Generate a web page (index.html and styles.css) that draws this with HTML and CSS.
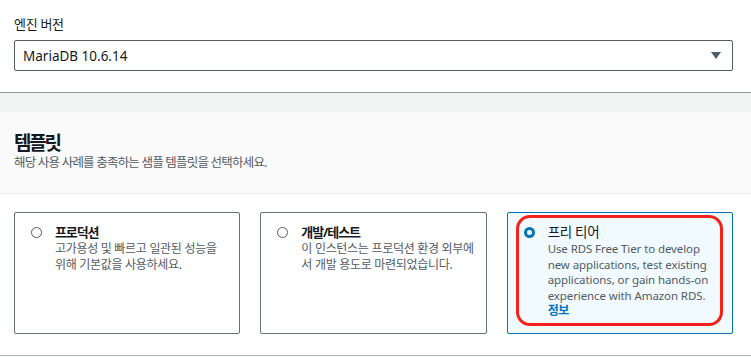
FILE: index.html
```html
<!DOCTYPE html>
<html lang="ko">
<head>
    <meta charset="UTF-8">
    <meta name="viewport" content="width=device-width, initial-scale=1.0">
    <title>템플릿</title>
    <link rel="stylesheet" href="styles.css">
</head>
<body>
    <div class="field">
        <div class="field_label">엔진 버전</div>
        <div class="select">
            <span class="select_value">MariaDB 10.6.14</span>
            <svg class="caret" width="10" height="8" viewBox="0 0 10 8"><polygon points="0,0 10,0 5,7" /></svg>
        </div>
    </div>

    <div class="band"></div>

    <div class="tpl_head">
        <h2 class="tpl_title">템플릿</h2>
        <p class="tpl_desc">해당 사용 사례를 충족하는 샘플 템플릿을 선택하세요.</p>
    </div>

    <div class="tiles">
        <label class="tile">
            <span class="radio"></span>
            <span class="tile_body">
                <span class="tile_title">프로덕션</span>
                <span class="tile_desc">고가용성 및 빠르고 일관된 성능을 위해 기본값을 사용하세요.</span>
            </span>
        </label>
        <label class="tile">
            <span class="radio"></span>
            <span class="tile_body">
                <span class="tile_title">개발/테스트</span>
                <span class="tile_desc">이 인스턴스는 프로덕션 환경 외부에서 개발 용도로 마련되었습니다.</span>
            </span>
        </label>
        <label class="tile on">
            <span class="radio"></span>
            <span class="tile_body">
                <span class="tile_title">프리 티어</span>
                <span class="tile_desc en">Use RDS Free Tier to develop new applications, test existing applications, or gain hands-on experience with Amazon RDS.</span>
                <a class="info" href="#">정보</a>
            </span>
            <span class="mark"></span>
        </label>
    </div>
</body>
</html>
```

FILE: styles.css
```css
*{
    margin: 0;
    padding: 0;
    box-sizing: border-box;
}
body{
    width: 751px;
    font-family: "Noto Sans", "Noto Sans CJK KR", sans-serif;
    color: #16191f;
    background: #fff;
}
a{
    text-decoration: none;
}

/* 엔진 버전 */
.field{
    padding: 14px 18px 21px 14px;
    border-bottom: 1px solid #879596;
}
.field_label{
    font-size: 13px;
    line-height: 20px;
    letter-spacing: -0.3px;
}
.select{
    display: flex;
    align-items: center;
    justify-content: space-between;
    height: 31px;
    margin-top: 6px;
    padding: 0 11px 0 8px;
    border: 1px solid #545b64;
    border-radius: 2px;
}
.select_value{
    font-size: 13.5px;
}
.caret{
    fill: #545b64;
}

.band{
    height: 19px;
    background: #f2f3f3;
}

/* 템플릿 */
.tpl_head{
    padding: 20px 14px 22px;
    background: #fafafa;
    border-bottom: 1px solid #eaeded;
}
.tpl_title{
    font-size: 19px;
    line-height: 22px;
    letter-spacing: -2.2px;
    font-weight: bold;
}
.tpl_desc{
    margin-top: 1px;
    font-size: 12.5px;
    line-height: 16px;
    letter-spacing: -0.8px;
    color: #545b64;
}

.tiles{
    display: grid;
    grid-template-columns: repeat(3, 1fr);
    gap: 20px;
    padding: 18px 18px 21px 14px;
    border-bottom: 1px solid #aab7b8;
}
.tile{
    display: flex;
    gap: 13px;
    height: 122px;
    padding: 10px 11px 10px 16px;
    border: 1px solid #687078;
    border-radius: 2px;
}
.radio{
    flex: none;
    width: 11px;
    height: 11px;
    margin-top: 3.5px;
    border: 1.3px solid #545b64;
    border-radius: 50%;
    background: #fff;
}
.tile_body{
    display: flex;
    flex-direction: column;
}
.tile_title{
    font-size: 13px;
    line-height: 18px;
    font-weight: bold;
    letter-spacing: -1.1px;
}
.tile_desc{
    font-size: 12px;
    line-height: 15.5px;
    letter-spacing: -0.3px;
    color: #545b64;
}
.tile_desc.en{
    font-size: 11.5px;
    letter-spacing: -0.1px;
}
.info{
    font-size: 12px;
    line-height: 15.5px;
    font-weight: bold;
    letter-spacing: -0.5px;
    color: #0073bb;
}

/* 선택된 타일 */
.tile.on{
    position: relative;
    border-color: #0073bb;
    background: #f1faff;
}
.tile.on .radio{
    border: 3.5px solid #0073bb;
}
.tile.on .tile_title{
    font-size: 13.5px;
    font-weight: normal;
    letter-spacing: -0.3px;
}
.mark{
    position: absolute;
    top: 2px;
    left: 8px;
    right: 9px;
    bottom: 7px;
    border: 3px solid #f5211b;
    border-radius: 14px;
    pointer-events: none;
}
```
